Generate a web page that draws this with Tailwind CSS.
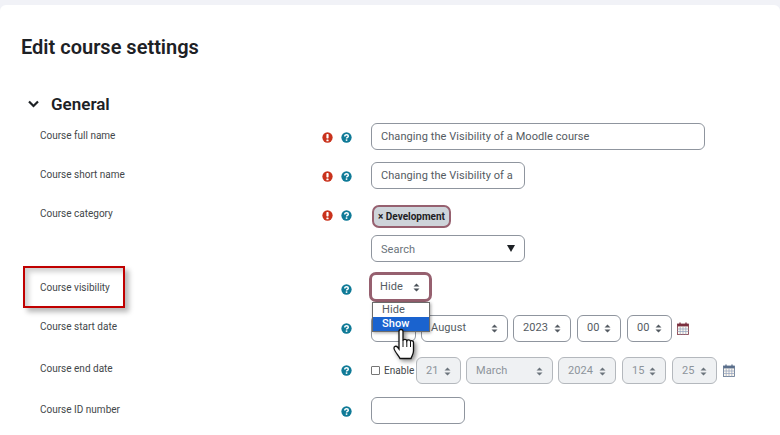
<!DOCTYPE html>
<html>
<head>
<meta charset="utf-8">
<script src="https://cdn.jsdelivr.net/npm/@tailwindcss/browser@4"></script>
</head>
<body class="m-0 bg-[#f1f2f7] font-['Roboto',sans-serif] text-[#1d2125] overflow-hidden">
<svg width="0" height="0" class="absolute">
  <defs>
    <symbol id="q" viewBox="0 0 12 12"><circle cx="6" cy="6" r="5.6" fill="#0f7a97"/><path d="M4.100 4.800c0-1.300 1-1.900 2-1.900s1.900.6 1.900 1.700c0 1.400-1.900 1.300-1.900 2.600" fill="none" stroke="#fff" stroke-width="1.600"/><rect x="5.200" y="8" width="1.700" height="1.700" fill="#fff"/></symbol>
    <symbol id="e" viewBox="0 0 12 12"><circle cx="6" cy="6" r="5.6" fill="#c9321c"/><rect x="4.800" y="2.200" width="2.400" height="5" rx=".8" fill="#fff"/><rect x="4.800" y="8.100" width="2.400" height="2" rx=".6" fill="#fff"/></symbol>
    <symbol id="ud" viewBox="0 0 7 9"><path d="M3.500 0.500 6.500 3.500H.5zM3.500 8.500.5 5.500h6z" fill="currentColor"/></symbol>
    <symbol id="cal" viewBox="0 0 12 13"><rect x=".5" y="2" width="11" height="10.500" fill="#fdf8ee" stroke="currentColor" stroke-width=".8"/><rect x=".5" y="2" width="11" height="2.400" fill="currentColor"/><path d="M3 .5v3M9 .5v3" stroke="currentColor" stroke-width="1.300"/><path d="M.5 7h11M.5 9.500h11M3.200 4.600v8M6 4.600v8M8.800 4.600v8" stroke="#8fa0bf" stroke-width=".7"/></symbol>
  </defs>
</svg>

<main class="relative mt-[5px] h-[430px] bg-white rounded-tl-[6px] rounded-tr-[6px] pl-[21px]">
  <h1 class="m-0 pt-[30px] text-[20px] leading-[25px] font-semibold text-[#1d2125]">Edit course settings</h1>

  <div class="flex items-center mt-[32px] h-[24px] pl-[7px] gap-[12px]">
    <svg width="11" height="8" viewBox="0 0 11 8"><path d="M1 1.500 5.500 6 10 1.500" fill="none" stroke="#1d2125" stroke-width="2.200"/></svg>
    <h2 class="m-0 text-[17px] leading-[24px] font-semibold">General</h2>
  </div>

  <div class="flex flex-col ml-[19px] mt-[7px] text-[10px]">
    <!-- full name -->
    <div class="flex h-[27px] mb-[12px]">
      <div class="w-[282px] pt-[6px] leading-[14px] text-[#43474a]">Course full name</div>
      <div class="w-[49px] flex items-center gap-[8px] pt-[1px]"><svg class="w-[11px] h-[11px]"><use href="#e"/></svg><svg class="w-[11px] h-[11px]"><use href="#q"/></svg></div>
      <div class="w-[334px] h-[27px] border border-[#8f959e] rounded-[6px] pl-[9px] pt-[1px] flex items-center text-[11px] tracking-[0.07px] text-[#545b62]">Changing the Visibility of a Moodle course</div>
    </div>
    <!-- short name -->
    <div class="flex h-[27px] mb-[16px]">
      <div class="w-[282px] pt-[6px] leading-[14px] text-[#43474a]">Course short name</div>
      <div class="w-[49px] flex items-center gap-[8px] pt-[1px]"><svg class="w-[11px] h-[11px]"><use href="#e"/></svg><svg class="w-[11px] h-[11px]"><use href="#q"/></svg></div>
      <div class="w-[154px] h-[27px] border border-[#8f959e] rounded-[6px] pl-[9px] pt-[2px] flex items-center text-[11px] tracking-[0.07px] text-[#545b62] whitespace-nowrap overflow-hidden">Changing the Visibility of a</div>
    </div>
    <!-- category -->
    <div class="flex h-[57px] mb-[12px]">
      <div class="w-[282px] pt-[2px] leading-[14px] text-[#43474a]">Course category</div>
      <div class="w-[49px] flex items-start pt-[5px] gap-[8px]"><svg class="w-[11px] h-[11px]"><use href="#e"/></svg><svg class="w-[11px] h-[11px]"><use href="#q"/></svg></div>
      <div class="flex flex-col items-start gap-[7px]">
        <div class="h-[23px] ml-[1px] px-[4px] bg-[#ced4da] rounded-[7px] border-[2px] border-[#96606f] flex items-center text-[10px] font-bold text-[#1d2125] whitespace-nowrap">× Development</div>
        <div class="w-[154px] h-[27px] border border-[#8f959e] rounded-[6px] pl-[9px] pr-[9px] flex items-center justify-between text-[11px] tracking-[0.07px] text-[#6a737b]"><span class="pt-[3px]">Search</span><svg width="8" height="7" viewBox="0 0 8 7"><path d="M0 0h8L4 7z" fill="#1d2125"/></svg></div>
      </div>
    </div>
    <!-- visibility -->
    <div class="flex h-[28px] mb-[13px]">
      <div class="w-[282px] pt-[7px] leading-[14px] text-[#43474a]">Course visibility</div>
      <div class="w-[49px] flex items-center justify-end pr-[19px] pt-[2px]"><svg class="w-[11px] h-[11px]"><use href="#q"/></svg></div>
      <div class="w-[63px] h-[30px] -ml-[2px] -mt-[2px] border-[3px] border-[#96606f] rounded-[7px] pl-[8px] pr-[9px] pt-[1px] flex items-center justify-between text-[11px] tracking-[0.07px] text-[#545b62]"><span>Hide</span><svg class="w-[7px] h-[9px] text-[#495057]"><use href="#ud"/></svg></div>
    </div>
    <!-- start date -->
    <div class="flex h-[27px] mb-[15px]">
      <div class="w-[282px] pt-[5px] leading-[14px] text-[#43474a]">Course start date</div>
      <div class="w-[49px] flex items-center justify-end pr-[19px]"><svg class="w-[11px] h-[11px]"><use href="#q"/></svg></div>
      <div class="flex items-center text-[11px] tracking-[0.07px] text-[#545b62]">
        <div class="w-[45px] h-[27px] border border-[#8f959e] rounded-[6px] mr-[5px]"></div>
        <div class="w-[87px] h-[27px] border border-[#8f959e] rounded-[6px] mr-[5px] pl-[9px] pr-[9px] flex items-center justify-between"><span>August</span><svg class="w-[7px] h-[9px]"><use href="#ud"/></svg></div>
        <div class="w-[58px] h-[27px] border border-[#8f959e] rounded-[6px] mr-[6px] pl-[9px] pr-[9px] flex items-center justify-between"><span>2023</span><svg class="w-[7px] h-[9px]"><use href="#ud"/></svg></div>
        <div class="w-[44px] h-[27px] border border-[#8f959e] rounded-[6px] mr-[6px] pl-[9px] pr-[9px] flex items-center justify-between"><span>00</span><svg class="w-[7px] h-[9px]"><use href="#ud"/></svg></div>
        <div class="w-[45px] h-[27px] border border-[#8f959e] rounded-[6px] mr-[5px] pl-[9px] pr-[9px] flex items-center justify-between"><span>00</span><svg class="w-[7px] h-[9px]"><use href="#ud"/></svg></div>
        <svg class="w-[12px] h-[13px] -mt-[1px] text-[#7b2f3f]"><use href="#cal"/></svg>
      </div>
    </div>
    <!-- end date -->
    <div class="flex h-[27px] mb-[13px]">
      <div class="w-[282px] pt-[5px] leading-[14px] text-[#43474a]">Course end date</div>
      <div class="w-[49px] flex items-center justify-end pr-[19px]"><svg class="w-[11px] h-[11px]"><use href="#q"/></svg></div>
      <div class="flex items-center text-[11px] tracking-[0.07px] text-[#8d949b]">
        <span class="w-[9px] h-[9px] border border-[#767676] rounded-[1px] mr-[4px]"></span>
        <span class="w-[32px] text-[10px] text-[#43474a]">Enable</span>
        <div class="w-[45px] h-[27px] bg-[#eff1f3] border border-[#b4b8bd] rounded-[6px] mr-[5px] pl-[9px] pr-[9px] pt-[1px] flex items-center justify-between"><span>21</span><svg class="w-[7px] h-[9px] text-[#6c757d]"><use href="#ud"/></svg></div>
        <div class="w-[87px] h-[27px] bg-[#eff1f3] border border-[#b4b8bd] rounded-[6px] mr-[5px] pl-[9px] pr-[9px] pt-[1px] flex items-center justify-between"><span>March</span><svg class="w-[7px] h-[9px] text-[#6c757d]"><use href="#ud"/></svg></div>
        <div class="w-[58px] h-[27px] bg-[#eff1f3] border border-[#b4b8bd] rounded-[6px] mr-[6px] pl-[9px] pr-[9px] pt-[1px] flex items-center justify-between"><span>2024</span><svg class="w-[7px] h-[9px] text-[#6c757d]"><use href="#ud"/></svg></div>
        <div class="w-[44px] h-[27px] bg-[#eff1f3] border border-[#b4b8bd] rounded-[6px] mr-[6px] pl-[9px] pr-[9px] pt-[1px] flex items-center justify-between"><span>15</span><svg class="w-[7px] h-[9px] text-[#6c757d]"><use href="#ud"/></svg></div>
        <div class="w-[45px] h-[27px] bg-[#eff1f3] border border-[#b4b8bd] rounded-[6px] mr-[6px] pl-[9px] pr-[9px] pt-[1px] flex items-center justify-between"><span>25</span><svg class="w-[7px] h-[9px] text-[#6c757d]"><use href="#ud"/></svg></div>
        <svg class="w-[12px] h-[13px] -mt-[1px] text-[#5b6f8c]"><use href="#cal"/></svg>
      </div>
    </div>
    <!-- id -->
    <div class="flex h-[27px]">
      <div class="w-[282px] pt-[6px] leading-[14px] text-[#43474a]">Course ID number</div>
      <div class="w-[49px] flex items-center justify-end pr-[19px] pt-[1px]"><svg class="w-[11px] h-[11px]"><use href="#q"/></svg></div>
      <div class="w-[94px] h-[27px] border border-[#8f959e] rounded-[6px]"></div>
    </div>
  </div>

  <!-- annotation box -->
  <div class="absolute left-[23px] top-[261px] w-[102px] h-[42px] border-[2px] border-[#c00000] shadow-[4px_4px_5px_rgba(0,0,0,0.28),inset_4px_4px_5px_rgba(0,0,0,0.18)]"></div>

  <!-- open dropdown -->
  <div class="absolute left-[372px] top-[297px] w-[58px] h-[30px] bg-white border border-[#6b6b6b] shadow-[1px_1px_3px_rgba(0,0,0,0.35)] text-[11px] tracking-[0.07px] leading-[14px]">
    <div class="pl-[9px] text-[#545b62]">Hide</div>
    <div class="pl-[9px] bg-[#1a63cf] text-white font-medium">Show</div>
  </div>

  <!-- hand cursor -->
  <svg class="absolute left-[392px] top-[322px] drop-shadow-[2px_2px_2px_rgba(0,0,0,0.45)]" width="26" height="36" viewBox="0 0 26 36">
    <path d="M9 2.500c1.300 0 2 .8 2 2v9c.4-1.500 3.500-1.500 3.800.2.500-1.300 3.400-1.200 3.700.5.700-1 3-.6 3 1.300v8.500c0 3-1.500 4.500-2.500 7.500H8c-1-2.500-5.500-7-6-10-.3-2 2-3 3.500-1.500L7 22V4.500c0-1.200.8-2 2-2z" fill="#fff" stroke="#111" stroke-width="1.300"/>
    <path d="M11 13v7M14.800 14v6M18.500 15v5" stroke="#111" stroke-width="1" fill="none"/>
  </svg>
</main>
</body>
</html>
